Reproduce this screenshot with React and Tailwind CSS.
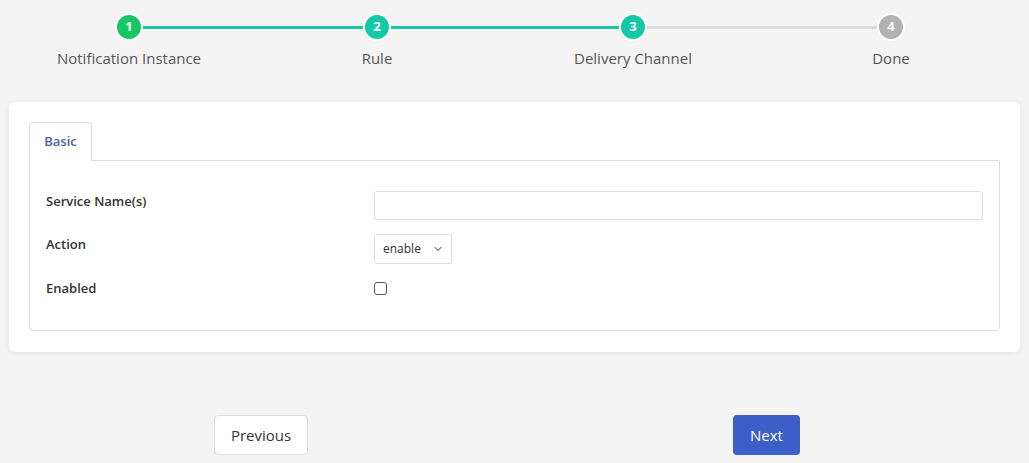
import { ChevronDown } from "lucide-react";

const steps = [
  { n: 1, label: "Notification Instance", w: "w-[258px]", circle: "bg-[#16c864]", left: null, right: "bg-[#17c9a9]" },
  { n: 2, label: "Rule", w: "w-[238px]", circle: "bg-[#14c9a9]", left: "bg-[#17c9a9]", right: "bg-[#17c9a9]" },
  { n: 3, label: "Delivery Channel", w: "w-[274px]", circle: "bg-[#14c9a9]", left: "bg-[#17c9a9]", right: "bg-[#dcdcdc]" },
  { n: 4, label: "Done", w: "w-[242px]", circle: "bg-[#b2b2b2]", left: "bg-[#dcdcdc]", right: null },
];

const Step = ({ step }) => (
  <div className={`${step.w} flex flex-col items-center`}>
    <div className="w-full flex items-center h-[30px]">
      <div className={`flex-1 h-[3px] ${step.left || ""}`}></div>
      <div
        className={`w-[28px] h-[28px] rounded-full border-2 border-white ${step.circle} text-white text-[13px] font-bold flex items-center justify-center`}
      >
        {step.n}
      </div>
      <div className={`flex-1 h-[3px] ${step.right || ""}`}></div>
    </div>
    <div className="mt-[6px] text-[15px] text-[#555] leading-5">{step.label}</div>
  </div>
);

export default function App() {
  return (
    <div
      className="w-[1029px] h-[463px] bg-[#f4f4f4] overflow-hidden"
      style={{ fontFamily: '"Open Sans", "Noto Sans", sans-serif' }}
    >
      <div className="flex pt-[12px]">
        {steps.map((s) => (
          <Step key={s.n} step={s} />
        ))}
      </div>

      <div className="mx-[9px] mt-[34px] bg-white rounded-md shadow-[0_1px_6px_rgba(0,0,0,0.08)] px-[20px] pt-[20px] pb-[21px]">
        <div className="flex">
          <div className="w-[63px] h-[39px] border border-[#dddddd] border-b-0 rounded-t-[4px] bg-white flex items-center justify-center text-[13px] font-semibold text-[#4462ad] -mb-px relative">
            Basic
          </div>
        </div>
        <div className="border border-[#dddddd] rounded-b-[4px] h-[171px] pt-[29px] pl-[16px] pr-[16px]">
          <div className="flex items-center h-[30px]">
            <div className="w-[328px] text-[13px] font-semibold text-[#333] -mt-[6px]">Service Name(s)</div>
            <input className="flex-1 h-[29px] border border-[#dddddd] rounded-[3px] outline-none" />
          </div>
          <div className="flex items-center h-[30px] mt-[14px]">
            <div className="w-[328px] text-[13px] font-semibold text-[#333] -mt-[8px]">Action</div>
            <div className="w-[78px] h-[30px] border border-[#dddddd] rounded-[3px] flex items-center justify-between pl-[8px] pr-[7px] text-[12px] text-[#333]">
              <span>enable</span>
              <ChevronDown className="w-3 h-3 text-[#888]" strokeWidth={2.5} />
            </div>
          </div>
          <div className="flex items-center h-[20px] mt-[13px]">
            <div className="w-[328px] text-[13px] font-semibold text-[#333] mt-[4px]">Enabled</div>
            <div className="w-[13px] h-[13px] border border-[#555] rounded-[3px] bg-white mt-[2px]"></div>
          </div>
        </div>
      </div>

      <div className="flex mt-[63px]">
        <div className="ml-[214px] w-[94px] h-[40px] bg-white border border-[#dddddd] rounded-[4px] flex items-center justify-center text-[15px] text-[#333]">
          Previous
        </div>
        <div className="ml-[425px] w-[67px] h-[40px] bg-[#3b5fc6] rounded-[4px] flex items-center justify-center text-[15px] text-white">
          Next
        </div>
      </div>
    </div>
  );
}
